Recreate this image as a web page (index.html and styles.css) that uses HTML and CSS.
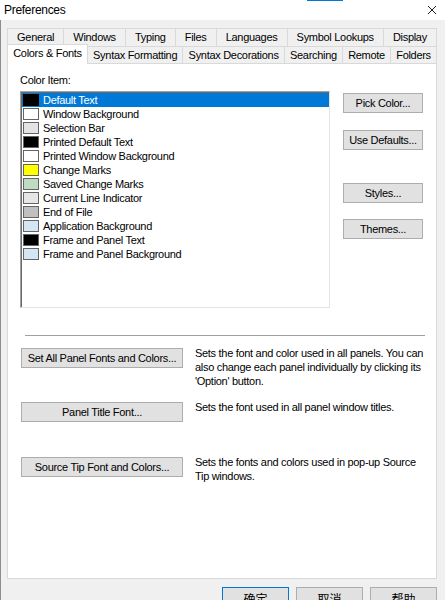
FILE: index.html
```html
<!DOCTYPE html>
<html lang="en">
<head>
    <meta charset="UTF-8">
    <meta name="viewport" content="width=device-width, initial-scale=1.0">
    <title>Preferences</title>
    <link rel="stylesheet" href="styles.css">
</head>
<body>

<div class="window">
    <div class="titlebar">
        <span class="title">Preferences</span>
        <svg class="close" width="10" height="10" viewBox="0 0 10 10">
            <path d="M1 1L9 9M9 1L1 9" stroke="#1a1a1a" stroke-width="1" fill="none"/>
        </svg>
        <span class="focus-mark"></span>
    </div>

    <div class="dialog">
        <div class="tabs">
            <div class="tab-row">
                <div class="tab">General</div>
                <div class="tab">Windows</div>
                <div class="tab">Typing</div>
                <div class="tab">Files</div>
                <div class="tab">Languages</div>
                <div class="tab">Symbol Lookups</div>
                <div class="tab">Display</div>
            </div>
            <div class="tab-row">
                <div class="tab active">Colors &amp; Fonts</div>
                <div class="tab">Syntax Formatting</div>
                <div class="tab">Syntax Decorations</div>
                <div class="tab">Searching</div>
                <div class="tab">Remote</div>
                <div class="tab">Folders</div>
            </div>
        </div>

        <div class="panel">
            <div class="field-label">Color Item:</div>
            <div class="colors">
                <ul class="color-list">
                    <li class="selected"><span class="swatch" style="background:#000000"></span>Default Text</li>
                    <li><span class="swatch" style="background:#ffffff"></span>Window Background</li>
                    <li><span class="swatch" style="background:#e3e3e3"></span>Selection Bar</li>
                    <li><span class="swatch" style="background:#000000"></span>Printed Default Text</li>
                    <li><span class="swatch" style="background:#ffffff"></span>Printed Window Background</li>
                    <li><span class="swatch" style="background:#ffff00"></span>Change Marks</li>
                    <li><span class="swatch" style="background:#c0dcc0"></span>Saved Change Marks</li>
                    <li><span class="swatch" style="background:#e6e6e6"></span>Current Line Indicator</li>
                    <li><span class="swatch" style="background:#c0c0c0"></span>End of File</li>
                    <li><span class="swatch" style="background:#d4e6f4"></span>Application Background</li>
                    <li><span class="swatch" style="background:#000000"></span>Frame and Panel Text</li>
                    <li><span class="swatch" style="background:#d4e6f4"></span>Frame and Panel Background</li>
                </ul>
                <div class="side-buttons">
                    <button class="btn pick">Pick Color...</button>
                    <button class="btn defaults">Use Defaults...</button>
                    <button class="btn styles">Styles...</button>
                    <button class="btn themes">Themes...</button>
                </div>
            </div>

            <div class="separator"></div>

            <div class="option-row">
                <button class="btn wide">Set All Panel Fonts and Colors...</button>
                <p class="desc">Sets the font and color used in all panels. You can also change each panel individually by clicking its 'Option' button.</p>
            </div>
            <div class="option-row">
                <button class="btn wide">Panel Title Font...</button>
                <p class="desc">Sets the font used in all panel window titles.</p>
            </div>
            <div class="option-row">
                <button class="btn wide">Source Tip Font and Colors...</button>
                <p class="desc">Sets the fonts and colors used in pop-up Source Tip windows.</p>
            </div>
        </div>

        <div class="dialog-buttons">
            <button class="btn cjk default">确定</button>
            <button class="btn cjk">取消</button>
            <button class="btn cjk">帮助</button>
        </div>
    </div>
</div>

</body>
</html>
```

FILE: styles.css
```css
body {
    margin: 0;
    padding: 0;
    font-family: 'Liberation Sans', Arial, sans-serif;
    font-size: 11px;
    letter-spacing: -0.3px;
    color: #000;
    background: #f0f0f0;
    overflow: hidden;
}
.window {
    width: 445px;
    height: 600px;
    overflow: hidden;
}
.titlebar {
    position: relative;
    height: 20px;
    background: #fff;
    display: flex;
    align-items: center;
    justify-content: space-between;
    padding: 0 8px 0 4px;
}
.title {
    font-size: 12px;
}
.close {
    display: block;
}
.focus-mark {
    position: absolute;
    top: 0;
    left: 307px;
    width: 36px;
    height: 1px;
    background: #0078d7;
}
.dialog {
    background: #f0f0f0;
    border-left: 1px solid #8e8e8e;
    padding: 8px 8px 0 6px;
    height: 580px;
}

/* tab strip, two rows */
.tab-row {
    display: flex;
}
.tab {
    flex: 1 1 auto;
    text-align: center;
    height: 17px;
    line-height: 17px;
    padding: 0 5px;
    border: 1px solid #d9d9d9;
    border-bottom: none;
    border-left: none;
    white-space: nowrap;
}
.tab:first-child {
    border-left: 1px solid #d9d9d9;
}
.tab-row + .tab-row .tab {
    height: 16px;
    line-height: 16px;
}
.tab-row + .tab-row .tab.active {
    position: relative;
    z-index: 1;
    background: #fff;
    height: 19px;
    line-height: 16px;
    margin-top: -2px;
    margin-bottom: -1px;
}

.panel {
    background: #fff;
    border: 1px solid #d9d9d9;
    height: 516px;
    box-sizing: border-box;
    padding: 10px 12px 0 12px;
}
.field-label {
    line-height: 13px;
}
.colors {
    display: flex;
    gap: 13px;
    margin-top: 4px;
}
.color-list {
    list-style: none;
    margin: 0;
    padding: 0;
    width: 310px;
    height: 217px;
    box-sizing: border-box;
    border: 1px solid #e3e3e3;
    border-top-color: #a0a0a0;
    border-left-color: #a0a0a0;
    box-shadow: inset 1px 1px 0 #696969;
    padding: 1px 0 0 1px;
}
.color-list li {
    display: flex;
    align-items: center;
    height: 14px;
    padding-left: 1px;
    white-space: nowrap;
}
.color-list li.selected {
    background: #0078d7;
    color: #fff;
}
.swatch {
    width: 14px;
    height: 10px;
    border: 1px solid #646464;
    margin-right: 4px;
    flex-shrink: 0;
}
.selected .swatch {
    border-color: #000;
}

.btn {
    font-family: inherit;
    font-size: 11px;
    letter-spacing: inherit;
    color: #000;
    background: #e1e1e1;
    border: 1px solid #adadad;
    padding: 0;
    height: 20px;
    box-sizing: border-box;
    cursor: pointer;
}
.side-buttons {
    display: flex;
    flex-direction: column;
    width: 80px;
}
.side-buttons .btn {
    width: 80px;
}
.pick {
    margin-top: 2px;
}
.defaults {
    margin-top: 17px;
}
.styles {
    margin-top: 33px;
}
.themes {
    margin-top: 16px;
}

.separator {
    height: 1px;
    background: #a0a0a0;
    margin: 27px -1px 0 5px;
}
.option-row {
    display: flex;
    align-items: flex-start;
    height: 55px;
}
.separator + .option-row {
    margin-top: 12px;
    height: 54px;
}
.btn.wide {
    width: 162px;
    margin-left: 1px;
    flex-shrink: 0;
}
.desc {
    margin: -2px 0 0 12px;
    width: 230px;
    line-height: 14px;
}

.dialog-buttons {
    display: flex;
    justify-content: flex-end;
    gap: 7px;
    margin-top: 8px;
}
.btn.cjk {
    width: 67px;
    height: 22px;
    font-family: 'Noto Sans CJK SC', sans-serif;
    font-size: 12px;
    letter-spacing: 0;
}
.btn.default {
    border-color: #0078d7;
}
```
